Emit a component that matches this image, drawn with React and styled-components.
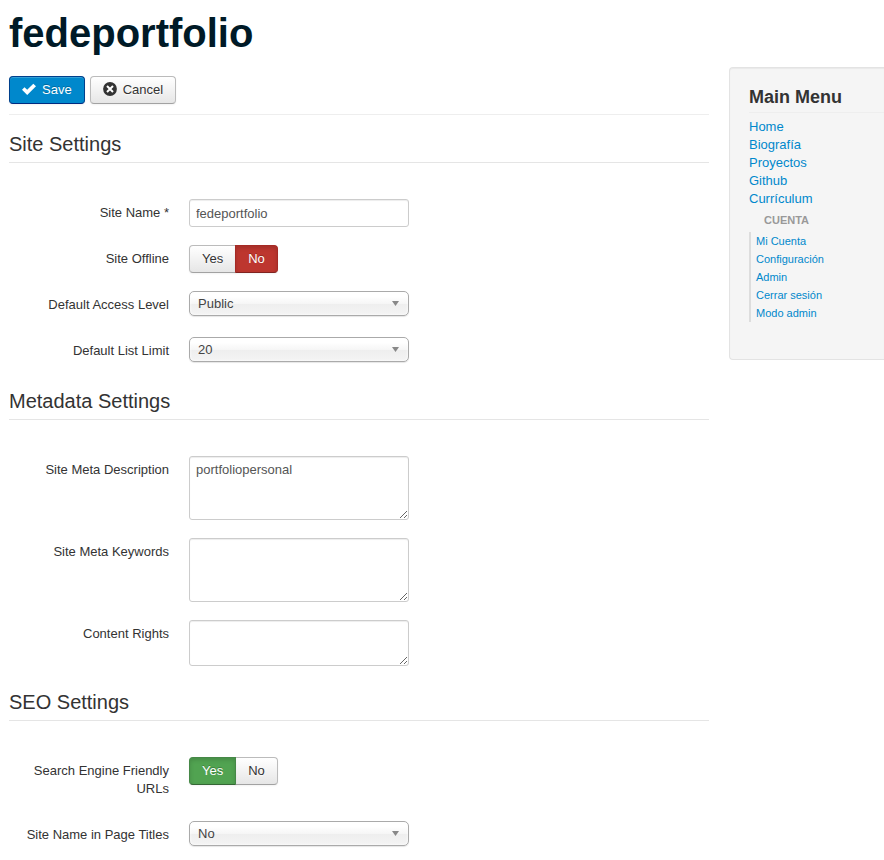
import React, { useState } from "react";
import styled, { createGlobalStyle, css } from "styled-components";

const GlobalStyle = createGlobalStyle`
  *, *::before, *::after { box-sizing: border-box; }
  body {
    margin: 0;
    background: #fff;
    color: #333;
    font-family: "Liberation Sans", Arial, Helvetica, sans-serif;
    font-size: 13px;
    line-height: 18px;
  }
  input, textarea, select, button { font: inherit; }
`;

const Page = styled.div`
  padding: 7px 0 0 9px;
`;

const SiteTitle = styled.h1`
  margin: 0 0 8px;
  color: #001a27;
  font-size: 40px;
  line-height: 52px;
`;

const Columns = styled.div`
  display: flex;
  align-items: flex-start;
  gap: 20px;
`;

const Main = styled.main`
  flex: 1;
  min-width: 0;
  padding-top: 9px;
`;

const Toolbar = styled.div`
  display: flex;
  gap: 5px;
  padding-bottom: 10px;
  border-bottom: 1px solid #eee;
  margin-bottom: 11px;
`;

const raised = css`
  border: 1px solid #bbb;
  border-bottom-color: #a2a2a2;
  background: linear-gradient(#fff, #e6e6e6);
  color: #333;
  text-shadow: 0 1px 1px rgba(255, 255, 255, 0.75);
  box-shadow: inset 0 1px 0 rgba(255, 255, 255, 0.2), 0 1px 2px rgba(0, 0, 0, 0.05);
`;

const Button = styled.button`
  ${raised}
  display: flex;
  align-items: center;
  height: 28px;
  padding: 0 12px;
  border-radius: 4px;
  cursor: pointer;

  svg {
    display: block;
    width: 14px;
    height: 14px;
    margin-right: 6px;
    margin-bottom: 2px;
  }

  ${({ $primary }) =>
    $primary &&
    css`
      border-color: #00408c;
      border-bottom-color: #002a80;
      background: #0088cc;
      color: #fff;
      text-shadow: 0 -1px 0 rgba(0, 0, 0, 0.25);
    `}
`;

const Section = styled.fieldset`
  min-width: 0;
  margin: 0;
  padding: 0;
  border: 0;
`;

const SectionTitle = styled.legend`
  display: block;
  width: 100%;
  margin-bottom: 36px;
  padding: 0;
  border-bottom: 1px solid #e5e5e5;
  font-size: 20px;
  line-height: 36px;
`;

const Row = styled.div`
  display: grid;
  grid-template-columns: 160px minmax(0, 1fr);
  column-gap: 20px;
  align-items: start;
  margin-bottom: 18px;
  ${Section}:last-child &:last-child { margin-bottom: 0; }
`;

const RowLabel = styled.label`
  padding: 5px 0;
  text-align: right;
`;

const field = css`
  display: block;
  width: 220px;
  max-width: 100%;
  padding: 4px 6px;
  border: 1px solid #ccc;
  border-radius: 3px;
  background: #fff;
  color: #555;
  box-shadow: inset 0 1px 1px rgba(0, 0, 0, 0.075);
`;

const TextInput = styled.input`
  ${field}
  height: 28px;
`;

const TextArea = styled.textarea`
  ${field}
  overflow: auto;
  resize: both;
`;

const SelectBox = styled.div`
  position: relative;
  width: 220px;
  max-width: 100%;

  svg {
    position: absolute;
    top: 10px;
    right: 10px;
    width: 7px;
    height: 5px;
    pointer-events: none;
  }
`;

const Select = styled.select`
  display: block;
  width: 100%;
  height: 25px;
  padding: 0 24px 0 8px;
  appearance: none;
  border: 1px solid #aaa;
  border-radius: 5px;
  background: linear-gradient(#fff 20%, #f6f6f6 50%, #eee 52%, #f4f4f4 100%);
  color: #444;
  box-shadow: inset 0 0 3px #fff, 0 1px 1px rgba(0, 0, 0, 0.1);
`;

const ToggleGroup = styled.div`
  display: flex;
`;

const chosen = {
  yes: css`
    border-color: #468847 #468847 #356635;
    background: #51a351;
  `,
  no: css`
    border-color: #a52a25 #a52a25 #802420;
    background: #bd362f;
  `,
};

const ToggleOption = styled.label`
  ${raised}
  position: relative;
  height: 28px;
  padding: 4px 12px;
  cursor: pointer;

  &:first-child { border-radius: 4px 0 0 4px; }
  &:last-child { border-radius: 0 4px 4px 0; margin-left: -1px; }

  input {
    position: absolute;
    inset: 0;
    width: 100%;
    height: 100%;
    margin: 0;
    opacity: 0;
    cursor: pointer;
  }

  ${({ $active, $kind }) =>
    $active &&
    css`
      ${chosen[$kind]}
      z-index: 1;
      color: #fff;
      text-shadow: 0 -1px 0 rgba(0, 0, 0, 0.25);
      box-shadow: inset 0 2px 4px rgba(0, 0, 0, 0.15), 0 1px 2px rgba(0, 0, 0, 0.05);
    `}
`;

const Sidebar = styled.aside`
  flex: 0 0 155px;
  min-height: 293px;
  padding: 20px 0 20px 19px;
  border: 1px solid #e3e3e3;
  border-right: 0;
  border-radius: 4px 0 0 4px;
  background: #f5f5f5;
  box-shadow: inset 0 1px 1px rgba(0, 0, 0, 0.05);
`;

const SidebarTitle = styled.h3`
  margin: 0 0 5px;
  padding-bottom: 6px;
  border-bottom: 1px solid #eee;
  font-size: 18px;
  line-height: 18px;
`;

const MenuList = styled.ul`
  margin: 0;
  padding: 0;
  list-style: none;
`;

const SubMenu = styled(MenuList)`
  padding-left: 5px;
  border-left: 2px solid #ddd;
  font-size: 11px;
`;

const MenuHeading = styled.h4`
  margin: 0;
  padding: 3px 15px;
  color: #999;
  font-size: 11px;
  line-height: 18px;
  text-transform: uppercase;
`;

const MenuLink = styled.a`
  display: block;
  color: #0088cc;
  text-decoration: none;
  &:hover { text-decoration: underline; }
`;

const CheckIcon = () => (
  <svg viewBox="0 0 14 14" aria-hidden="true">
    <path d="M0 7.8 2.5 5.2 5.2 7.8 11.3 1.7 14 4.2 5.2 12.9Z" fill="#fff" />
  </svg>
);

const CancelIcon = () => (
  <svg viewBox="0 0 14 14" aria-hidden="true">
    <circle cx="7" cy="7" r="6.9" fill="#333" />
    <path d="M4 4 10 10M10 4 4 10" stroke="#fff" strokeWidth="2" />
  </svg>
);

function TextRow({ id, label, value }) {
  return (
    <Row>
      <RowLabel htmlFor={id}>{label}</RowLabel>
      <TextInput id={id} type="text" defaultValue={value} />
    </Row>
  );
}

function AreaRow({ id, label, value = "", rows }) {
  return (
    <Row>
      <RowLabel htmlFor={id}>{label}</RowLabel>
      <TextArea id={id} rows={rows} defaultValue={value} />
    </Row>
  );
}

function SelectRow({ id, label, options }) {
  return (
    <Row>
      <RowLabel htmlFor={id}>{label}</RowLabel>
      <SelectBox>
        <Select id={id}>
          {options.map((option) => (
            <option key={option}>{option}</option>
          ))}
        </Select>
        <svg viewBox="0 0 7 5" aria-hidden="true">
          <path d="M0 0H7L3.5 5Z" fill="#888" />
        </svg>
      </SelectBox>
    </Row>
  );
}

function ToggleRow({ id, label, initial }) {
  const [value, setValue] = useState(initial);
  return (
    <Row>
      <RowLabel as="div" id={id}>{label}</RowLabel>
      <ToggleGroup role="radiogroup" aria-labelledby={id}>
        {[["yes", "Yes"], ["no", "No"]].map(([kind, text]) => (
          <ToggleOption key={kind} $kind={kind} $active={value === kind}>
            <input
              type="radio"
              name={id}
              value={kind}
              checked={value === kind}
              onChange={() => setValue(kind)}
            />
            {text}
          </ToggleOption>
        ))}
      </ToggleGroup>
    </Row>
  );
}

const menu = ["Home", "Biografía", "Proyectos", "Github", "Currículum"];
const account = ["Mi Cuenta", "Configuración", "Admin", "Cerrar sesión", "Modo admin"];

const MenuItems = ({ items }) =>
  items.map((item) => (
    <li key={item}>
      <MenuLink href="#">{item}</MenuLink>
    </li>
  ));

export default function App() {
  return (
    <Page>
      <GlobalStyle />
      <SiteTitle>fedeportfolio</SiteTitle>
      <Columns>
        <Main>
          <Toolbar>
            <Button type="button" $primary><CheckIcon />Save</Button>
            <Button type="button"><CancelIcon />Cancel</Button>
          </Toolbar>
          <form>
            <Section>
              <SectionTitle>Site Settings</SectionTitle>
              <TextRow id="site-name" label="Site Name *" value="fedeportfolio" />
              <ToggleRow id="site-offline" label="Site Offline" initial="no" />
              <SelectRow id="access" label="Default Access Level" options={["Public", "Registered", "Special"]} />
              <SelectRow id="list-limit" label="Default List Limit" options={["20", "50", "100"]} />
            </Section>
            <Section>
              <SectionTitle>Metadata Settings</SectionTitle>
              <AreaRow id="meta-description" label="Site Meta Description" value="portfoliopersonal" rows={3} />
              <AreaRow id="meta-keywords" label="Site Meta Keywords" rows={3} />
              <AreaRow id="rights" label="Content Rights" rows={2} />
            </Section>
            <Section>
              <SectionTitle>SEO Settings</SectionTitle>
              <ToggleRow id="friendly-urls" label="Search Engine Friendly URLs" initial="yes" />
              <SelectRow id="name-in-titles" label="Site Name in Page Titles" options={["No", "Before", "After"]} />
            </Section>
          </form>
        </Main>
        <Sidebar>
          <SidebarTitle>Main Menu</SidebarTitle>
          <MenuList><MenuItems items={menu} /></MenuList>
          <MenuHeading>Cuenta</MenuHeading>
          <SubMenu><MenuItems items={account} /></SubMenu>
        </Sidebar>
      </Columns>
    </Page>
  );
}
